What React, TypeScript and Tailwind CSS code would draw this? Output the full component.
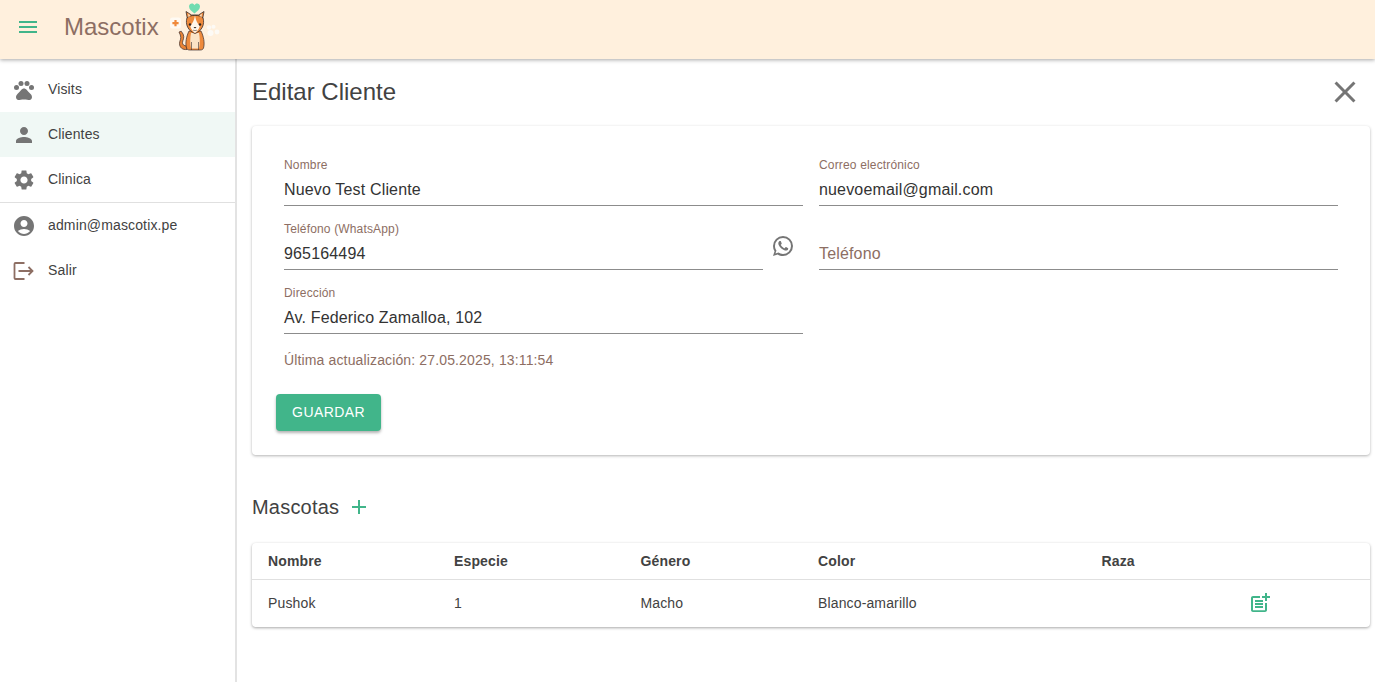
const GREEN = "#41b58a";

function I({ d, className, children }: { d?: string; className?: string; children?: React.ReactNode }) {
  return (
    <svg viewBox="0 0 24 24" fill="currentColor" className={className}>
      {d ? <path d={d} /> : null}
      {children}
    </svg>
  );
}

function Logo() {
  return (
    <svg viewBox="0 0 52 50" className="w-[52px] h-[50px] shrink-0">
      <path d="M26.500 11.500c-2.800-2.200-5.500-4.200-5.500-6.900 0-3.400 4.300-4.300 5.500-1.300 1.200-3 5.500-2.100 5.500 1.300 0 2.700-2.700 4.700-5.500 6.900z" fill="#72dcb0" />
      <path d="M4.500 15.500h6a2.500 2.500 0 0 1 2.500 2.500v6a2.500 2.500 0 0 1-2.500 2.500h-6A2.500 2.500 0 0 1 2 24v-6a2.500 2.500 0 0 1 2.500-2.500z" fill="#fffaf3" />
      <path d="M6.400 18h2.200v2h2v2.200h-2v2H6.400v-2h-2V20h2z" fill="#f08a3c" />
      <g fill="#fdfaf5">
        <circle cx="41" cy="25.500" r="2.200" /><circle cx="45.500" cy="24.800" r="2" /><circle cx="49" cy="30" r="2.400" /><circle cx="42.500" cy="31" r="3" />
      </g>
      <path d="M19 47.500c-4.500 .5-7.500-2-7.500-6 0-3 2.200-4.500 .8-8.500l-1.300-3 2.200-.8 2 3c1.500 3.500-.5 6-.7 8.300-.2 2 1.500 3.500 4.500 3.500z" fill="#e98335" stroke="#3b2d2b" strokeWidth=".7" />
      <path d="M21 29c-2.500 5-4 12-2.500 17 .3 1.200 1.500 2 3 2h11c1.500 0 2.700-.8 3-2 1.500-5 0-12-2.500-17z" fill="#ee8a3c" stroke="#3b2d2b" strokeWidth=".7" />
      <path d="M23 31c-1 5-1 10 0 15.500h8c1-5.500 1-10.500 0-15.500z" fill="#fbe3c6" />
      <path d="M23.500 40v8M30.500 40v8" stroke="#3b2d2b" strokeWidth=".6" />
      <path d="M18 9.500l1.500 8h15l1.500-8-5.500 3.500h-7z" fill="#ee8a3c" stroke="#3b2d2b" strokeWidth=".8" strokeLinejoin="round" />
      <path d="M19 16c-2 6 1 13 8 15.500 7-2.500 10-9.500 8-15.500-2.500-3.500-13.500-3.500-16 0z" fill="#ee8a3c" stroke="#3b2d2b" strokeWidth=".8" />
      <path d="M27 13.500c-1 4-1 6-4.800 10.500 1 3.500 3 5.800 4.800 7 1.800-1.200 3.800-3.500 4.800-7-3.800-4.500-3.800-6.500-4.800-10.500z" fill="#fff6ea" />
      <path d="M20 11.500l.5 4 2-2zM34 11.500l-.5 4-2-2z" fill="#fbd9b4" />
      <circle cx="22" cy="22.500" r="1.200" fill="#2b2220" /><circle cx="32" cy="22.500" r="1.200" fill="#2b2220" />
      <path d="M25.500 25h3l-1.500 1.600z" fill="#2b2220" />
      <path d="M25 28c1 .8 3 .8 4 0" stroke="#2b2220" strokeWidth=".5" fill="none" />
    </svg>
  );
}

function Nav({ icon, label, active }: { icon: React.ReactNode; label: string; active?: boolean }) {
  return (
    <div className={`h-[45px] flex items-center pl-3 text-[14px] tracking-[0.01em] text-[#424242] ${active ? "bg-[#f0f8f5]" : ""}`}>
      <span className="w-9 shrink-0 flex">{icon}</span>
      <span>{label}</span>
    </div>
  );
}

function Field({ label, value, placeholder }: { label?: string; value?: string; placeholder?: string }) {
  return (
    <div className="h-[48px] flex flex-col border-b border-[#8c8c8c] w-full tracking-[0.01em]">
      <div className="h-[16px] mt-[-1px] text-[12px] leading-[16px] text-[#8d6e63]">{label}</div>
      <div className={`mt-[5px] text-[16px] leading-[24px] ${placeholder ? "text-[#8d6e63]" : "text-[#333333]"}`}>{value ?? placeholder}</div>
    </div>
  );
}

const cols = "grid grid-cols-[186px_186.5px_177.5px_283.5px_148px_1fr] items-center pl-4 text-[14px] tracking-[0.01em] text-[#424242]";

export default function App() {
  return (
    <div className="h-[682px] w-[1375px] overflow-hidden bg-white flex flex-col font-['Liberation_Sans',Arial,sans-serif]">
      <header className="h-[59px] shrink-0 bg-[#fff0dd] shadow-[0_1px_4px_rgba(0,0,0,0.35)] relative z-10 flex items-center pl-4">
        <I d="M3 18h18v-2H3v2zm0-5h18v-2H3v2zm0-7v2h18V6H3z" className="w-6 h-6 text-[#41b58a] shrink-0 -mt-[5px]" />
        <span className="ml-6 text-[24px] leading-none text-[#8d6e63] -mt-[5px]">Mascotix</span>
        <span className="ml-[9px] flex -mt-[5px]"><Logo /></span>
      </header>
      <div className="flex flex-1 min-h-0">
        <aside className="w-[237px] shrink-0 border-r-2 border-[#e3e3e3] pt-2">
          <Nav label="Visits" icon={
            <I className="w-6 h-6 text-[#757575]">
              <circle cx="4.5" cy="9.5" r="2.5" /><circle cx="9" cy="5.5" r="2.5" /><circle cx="15" cy="5.5" r="2.5" /><circle cx="19.5" cy="9.5" r="2.5" />
              <path d="M17.34 14.86c-.87-1.02-1.6-1.89-2.48-2.91-.46-.54-1.05-1.08-1.75-1.32-.11-.04-.22-.07-.33-.09-.25-.04-.52-.04-.78-.04s-.53 0-.79.05c-.11.02-.22.05-.33.09-.7.24-1.28.78-1.75 1.32-.87 1.02-1.6 1.89-2.48 2.91-1.31 1.31-2.92 2.76-2.62 4.79.29 1.02 1.02 2.03 2.33 2.32.73.15 3.06-.44 5.54-.44h.18c2.48 0 4.81.58 5.54.44 1.31-.29 2.04-1.31 2.33-2.32.31-2.04-1.3-3.49-2.61-4.8z" />
            </I>
          } />
          <Nav active label="Clientes" icon={<I d="M12 12c2.21 0 4-1.79 4-4s-1.79-4-4-4-4 1.79-4 4 1.79 4 4 4zm0 2c-2.67 0-8 1.34-8 4v2h16v-2c0-2.66-5.33-4-8-4z" className="w-6 h-6 text-[#757575]" />} />
          <Nav label="Clinica" icon={<I d="M19.14 12.94c.04-.3.06-.61.06-.94 0-.32-.02-.64-.07-.94l2.03-1.58c.18-.14.23-.41.12-.61l-1.92-3.32c-.12-.22-.37-.29-.59-.22l-2.39.96c-.5-.38-1.03-.7-1.62-.94l-.36-2.54c-.04-.24-.24-.41-.48-.41h-3.84c-.24 0-.43.17-.47.41l-.36 2.54c-.59.24-1.13.57-1.62.94l-2.39-.96c-.22-.08-.47 0-.59.22L2.74 8.87c-.12.21-.08.47.12.61l2.03 1.58c-.05.3-.09.63-.09.94s.02.64.07.94l-2.03 1.58c-.18.14-.23.41-.12.61l1.92 3.32c.12.22.37.29.59.22l2.39-.96c.5.38 1.03.7 1.62.94l.36 2.54c.05.24.24.41.48.41h3.84c.24 0 .44-.17.47-.41l.36-2.54c.59-.24 1.13-.56 1.62-.94l2.39.96c.22.08.47 0 .59-.22l1.92-3.32c.12-.22.07-.47-.12-.61l-2.01-1.58zM12 15.6c-1.98 0-3.6-1.62-3.6-3.6s1.62-3.6 3.6-3.6 3.6 1.62 3.6 3.6-1.62 3.6-3.6 3.6z" className="w-6 h-6 text-[#757575]" />} />
          <div className="h-px bg-[#e0e0e0]" />
          <Nav label="admin@mascotix.pe" icon={<I d="M12 2C6.48 2 2 6.48 2 12s4.48 10 10 10 10-4.48 10-10S17.52 2 12 2zm0 4c1.93 0 3.5 1.57 3.5 3.5S13.93 13 12 13s-3.5-1.57-3.5-3.5S10.070 6 12 6zm0 14c-2.03 0-4.43-.82-6.14-2.88C7.55 15.8 9.68 15 12 15s4.45.8 6.14 2.12C16.43 19.18 14.03 20 12 20z" className="w-6 h-6 text-[#757575]" />} />
          <Nav label="Salir" icon={
            <svg viewBox="0 0 24 24" fill="none" stroke="#8d6e63" strokeWidth="1.8" className="w-6 h-6">
              <path d="M12.500 4H3.500a1 1 0 0 0-1 1v14a1 1 0 0 0 1 1h9M6.500 12h14M16.500 8l4 4-4 4" />
            </svg>
          } />
        </aside>
        <main className="flex-1 min-w-0 pl-[15px] pr-[5px]">
          <div className="h-[67px] flex items-center justify-between">
            <h1 className="text-[24px] leading-none text-[#424242] -mt-[2px]">Editar Cliente</h1>
            <I d="M19 6.41 17.59 5 12 10.59 6.41 5 5 6.41 10.59 12 5 17.59 6.41 19 12 13.41 17.59 19 19 17.59 13.41 12z" className="w-9 h-9 text-[#757575] mr-[7px] -mt-[2px]" />
          </div>
          <section className="h-[329px] rounded-[4px] bg-white shadow-[0_1px_3px_rgba(0,0,0,0.3)] px-8 pt-[32px]">
            <div className="grid grid-cols-2 gap-x-4 gap-y-4">
              <Field label="Nombre" value="Nuevo Test Cliente" />
              <Field label="Correo electrónico" value="nuevoemail@gmail.com" />
              <div className="flex items-start">
                <div className="w-[479px] shrink-0"><Field label="Teléfono (WhatsApp)" value="965164494" /></div>
                <I d="M16.75 13.96c.25.13.41.2.46.3.06.11.04.61-.21 1.18-.2.56-1.24 1.1-1.7 1.12-.46.02-.47.36-2.96-.73-2.49-1.09-3.99-3.75-4.11-3.92-.12-.17-.96-1.38-.92-2.61.05-1.22.69-1.8.95-2.04.24-.26.51-.29.68-.26h.47c.15 0 .36-.06.55.45l.69 1.87c.06.13.1.28.01.44l-.27.41-.39.42c-.12.12-.26.25-.12.5.12.26.62 1.09 1.32 1.78.91.88 1.71 1.17 1.95 1.3.24.14.39.12.54-.04l.81-.94c.19-.25.35-.19.58-.11l1.67.88M12 2a10 10 0 0 1 10 10 10 10 0 0 1-10 10c-1.97 0-3.8-.57-5.35-1.55L2 22l1.55-4.65A9.969 9.969 0 0 1 2 12 10 10 0 0 1 12 2m0 2a8 8 0 0 0-8 8c0 1.72.54 3.31 1.46 4.61L4.5 19.5l2.89-.96A7.95 7.95 0 0 0 12 20a8 8 0 0 0 8-8 8 8 0 0 0-8-8z" className="w-6 h-6 text-[#757575] ml-[8px] mt-[12px]" />
              </div>
              <Field placeholder="Teléfono" />
              <Field label="Dirección" value="Av. Federico Zamalloa, 102" />
              <div />
            </div>
            <p className="mt-[16px] text-[14px] leading-5 tracking-[0.01em] text-[#8d6e63]">Última actualización: 27.05.2025, 13:11:54</p>
            <button className="mt-[24px] -ml-2 w-[105px] h-[37px] rounded-[4px] text-white text-[14px] uppercase tracking-[0.4px] shadow-[0_2px_3px_rgba(0,0,0,0.3)]" style={{ backgroundColor: GREEN }}>Guardar</button>
          </section>
          <div className="mt-[36px] h-[32px] flex items-center">
            <h2 className="text-[20px] leading-none tracking-[0.01em] text-[#424242]">Mascotas</h2>
            <I d="M19 13h-6v6h-2v-6H5v-2h6V5h2v6h6v2z" className="w-6 h-6 text-[#41b58a] ml-2" />
          </div>
          <section className="mt-[20px] h-[84px] rounded-[4px] bg-white shadow-[0_1px_3px_rgba(0,0,0,0.35)]">
            <div className={`${cols} h-[37px] border-b border-[#e0e0e0] font-bold`}>
              <span>Nombre</span><span>Especie</span><span>Género</span><span>Color</span><span>Raza</span><span />
            </div>
            <div className={`${cols} h-[47px]`}>
              <span>Pushok</span><span>1</span><span>Macho</span><span>Blanco-amarillo</span><span />
              <I d="M17 19.220H5V7h7V5H5c-1.100 0-2 .9-2 2v12c0 1.100.9 2 2 2h12c1.100 0 2-.9 2-2v-7h-2v7.220zM19 2h-2v3h-3c.010.010 0 2 0 2h3v2.990c.010.010 2 0 2 0V7h3V5h-3V2zM7 9h8v2H7zM7 12v2h8v-2h-3zM7 15h8v2H7z" className="w-6 h-6 text-[#41b58a] -ml-[2px] -mt-[1px]" />
            </div>
          </section>
        </main>
      </div>
    </div>
  );
}
